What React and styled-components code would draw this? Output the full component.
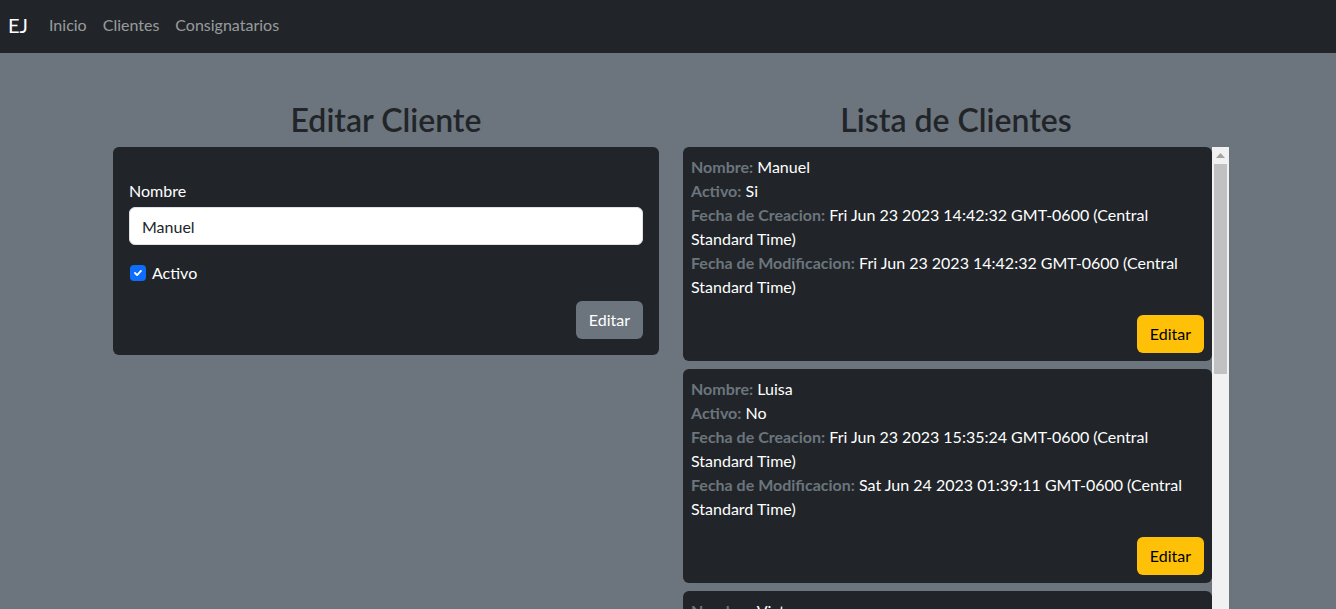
import React from "react";
import styled, { createGlobalStyle } from "styled-components";

const Global = createGlobalStyle`
  html, body { margin: 0; padding: 0; }
  body {
    background: #6c757d;
    color: #212529;
    font-family: Lato, "Liberation Sans", sans-serif;
    font-size: 16px;
    line-height: 1.5;
    overflow: hidden;
  }
  * { box-sizing: border-box; }
`;

const Navbar = styled.nav`
  height: 53px;
  background: #212529;
  display: flex;
  align-items: center;
  padding: 0 8px 3px;
`;

const Brand = styled.span`
  color: #fff;
  font-size: 20px;
  margin-right: 13px;
`;

const NavLink = styled.a`
  color: rgba(255, 255, 255, 0.55);
  padding: 0 8px;
  text-decoration: none;
`;

const Container = styled.main`
  width: 1116px;
  margin-left: 113px;
  padding-top: 48px;
  display: grid;
  grid-template-columns: 546px 546px;
  column-gap: 24px;
  align-items: start;
`;

const Column = styled.section`
  display: flex;
  flex-direction: column;
`;

const Title = styled.h2`
  margin: 0 0 8px;
  font-size: 32px;
  font-weight: 600;
  line-height: 1.2;
  text-align: center;
  color: #212529;
`;

const Card = styled.div`
  background: #212529;
  border-radius: 6px;
  padding: ${(p) => p.$pad || "8px"};
  color: #fff;
`;

const Label = styled.label`
  display: block;
  margin-top: 16px;
  margin-bottom: 4px;
  color: #fff;
`;

const Input = styled.input`
  display: block;
  width: 100%;
  height: 38px;
  padding: 6px 12px;
  font: inherit;
  color: #212529;
  background: #fff;
  border: 1px solid #dee2e6;
  border-radius: 6px;
  outline: none;
`;

const CheckRow = styled.div`
  display: flex;
  align-items: center;
  gap: 6px;
  margin-top: 16px;
  height: 24px;
  padding-left: 1px;
`;

const CheckBox = styled.span`
  width: 16px;
  height: 16px;
  border-radius: 4px;
  background: #0d6efd;
  display: inline-flex;
  align-items: center;
  justify-content: center;
`;

const ButtonRow = styled.div`
  display: flex;
  justify-content: flex-end;
  margin-top: 16px;
`;

const Button = styled.button`
  height: 38px;
  padding: 6px 13px;
  font: inherit;
  border: none;
  border-radius: 6px;
  background: ${(p) => (p.$variant === "warning" ? "#ffc107" : "#6c757d")};
  color: ${(p) => (p.$variant === "warning" ? "#000" : "#fff")};
`;

const ListFrame = styled.div`
  display: flex;
  height: calc(100vh - 147px);
  overflow: hidden;
`;

const List = styled.div`
  flex: 1;
  min-width: 0;
  display: flex;
  flex-direction: column;
  gap: 8px;
`;

const ScrollTrack = styled.div`
  flex: none;
  width: 17px;
  background: #f1f1f1;
  display: flex;
  flex-direction: column;
  align-items: center;
`;

const ScrollArrow = styled.div`
  height: 17px;
  width: 17px;
  display: flex;
  align-items: center;
  justify-content: center;
`;

const ScrollThumb = styled.div`
  width: 13px;
  height: 210px;
  background: #c1c1c1;
`;

const ClientCard = styled(Card)`
  flex: none;
`;

const Line = styled.div`
  line-height: 24px;
`;

const Key = styled.strong`
  color: #6c757d;
  font-weight: 700;
`;

const clients = [
  {
    nombre: "Manuel",
    activo: "Si",
    creacion: "Fri Jun 23 2023 14:42:32 GMT-0600 (Central Standard Time)",
    modificacion: "Fri Jun 23 2023 14:42:32 GMT-0600 (Central Standard Time)",
  },
  {
    nombre: "Luisa",
    activo: "No",
    creacion: "Fri Jun 23 2023 15:35:24 GMT-0600 (Central Standard Time)",
    modificacion: "Sat Jun 24 2023 01:39:11 GMT-0600 (Central Standard Time)",
  },
  {
    nombre: "Victor",
    activo: "Si",
    creacion: "Sat Jun 24 2023 10:12:05 GMT-0600 (Central Standard Time)",
    modificacion: "Sat Jun 24 2023 10:12:05 GMT-0600 (Central Standard Time)",
  },
];

export default function App() {
  return (
    <>
      <Global />
      <Navbar>
        <Brand>EJ</Brand>
        <NavLink href="#">Inicio</NavLink>
        <NavLink href="#">Clientes</NavLink>
        <NavLink href="#">Consignatarios</NavLink>
      </Navbar>
      <Container>
        <Column>
          <Title>Editar Cliente</Title>
          <Card $pad="16px">
            <Label>Nombre</Label>
            <Input defaultValue="Manuel" />
            <CheckRow>
              <CheckBox>
                <svg width="12" height="12" viewBox="0 0 20 20">
                  <path
                    d="M5 10l3.5 3.5 6.5-7"
                    fill="none"
                    stroke="#fff"
                    strokeWidth="3"
                    strokeLinecap="round"
                    strokeLinejoin="round"
                  />
                </svg>
              </CheckBox>
              <span>Activo</span>
            </CheckRow>
            <ButtonRow>
              <Button>Editar</Button>
            </ButtonRow>
          </Card>
        </Column>
        <Column>
          <Title>Lista de Clientes</Title>
          <ListFrame>
            <List>
              {clients.map((c) => (
                <ClientCard key={c.nombre}>
                  <Line>
                    <Key>Nombre:</Key> {c.nombre}
                  </Line>
                  <Line>
                    <Key>Activo:</Key> {c.activo}
                  </Line>
                  <Line>
                    <Key>Fecha de Creacion:</Key> {c.creacion}
                  </Line>
                  <Line>
                    <Key>Fecha de Modificacion:</Key> {c.modificacion}
                  </Line>
                  <ButtonRow>
                    <Button $variant="warning">Editar</Button>
                  </ButtonRow>
                </ClientCard>
              ))}
            </List>
            <ScrollTrack>
              <ScrollArrow>
                <svg width="9" height="5" viewBox="0 0 9 5">
                  <polygon points="0,5 4.5,0 9,5" fill="#a3a3a3" />
                </svg>
              </ScrollArrow>
              <ScrollThumb />
            </ScrollTrack>
          </ListFrame>
        </Column>
      </Container>
    </>
  );
}
